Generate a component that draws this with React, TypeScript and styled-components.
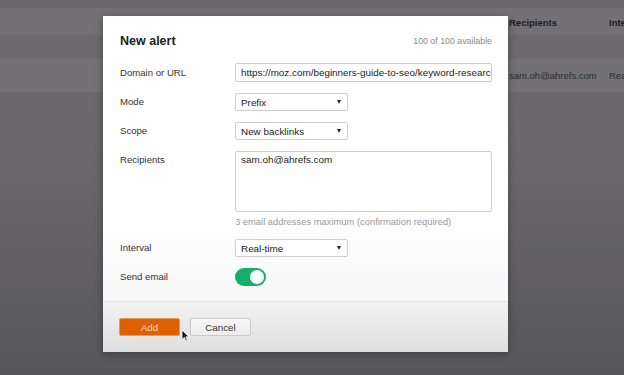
import React from 'react';
import styled, { createGlobalStyle } from 'styled-components';

const GlobalStyle = createGlobalStyle`
  html, body {
    margin: 0;
    padding: 0;
    background: #5a595c;
  }
  body {
    font-family: "Liberation Sans", Arial, Helvetica, sans-serif;
  }
`;

const Screen = styled.div`
  position: relative;
  width: 624px;
  height: 375px;
  overflow: hidden;
  display: flex;
  flex-direction: column;
  background: linear-gradient(180deg, #6d6b6f 0%, #6a686c 40%, #58575a 100%);
`;

const Band = styled.div<{ $h: number; $bg: string }>`
  height: ${p => p.$h}px;
  background: ${p => p.$bg};
  display: grid;
  grid-template-columns: 509px 100px 1fr;
  align-items: center;
  font-size: 9.5px;
  color: #2a292c;
  flex-shrink: 0;
`;

const HeadCell = styled.div`
  font-weight: bold;
  color: #1c1b1e;
  white-space: nowrap;
  overflow: hidden;
  padding-top: 2px;
`;

const Cell = styled.div`
  white-space: nowrap;
  overflow: hidden;
  color: #2c2b2e;
`;

const Modal = styled.div`
  position: absolute;
  left: 103px;
  top: 16px;
  width: 405px;
  height: 336px;
  display: flex;
  flex-direction: column;
  background: linear-gradient(180deg, #ffffff 0%, #ffffff 60%, #f2f2f2 100%);
  box-shadow: 0 2px 8px rgba(0, 0, 0, 0.35);
`;

const Body = styled.div`
  padding: 17px 16px 15px 17px;
  display: flex;
  flex-direction: column;
`;

const Header = styled.div`
  display: flex;
  justify-content: space-between;
  align-items: center;
  height: 16px;
  margin-bottom: 14px;
`;

const Title = styled.div`
  font-size: 12.5px;
  font-weight: bold;
  color: #222;
`;

const Quota = styled.div`
  font-size: 8.8px;
  color: #8a8a8a;
`;

const Form = styled.div`
  display: flex;
  flex-direction: column;
  gap: 11px;
`;

const Row = styled.div`
  display: grid;
  grid-template-columns: 115px 1fr;
  align-items: start;
`;

const Label = styled.div<{ $h?: number }>`
  font-size: 9.6px;
  color: #333;
  line-height: ${p => p.$h ?? 18}px;
`;

const TextInput = styled.div`
  height: 19px;
  box-sizing: border-box;
  border: 1px solid #cfcfcf;
  border-radius: 2px;
  background: #fff;
  padding: 0 5px;
  font-size: 9.9px;
  line-height: 17px;
  color: #222;
  white-space: nowrap;
  overflow: hidden;
`;

const Select = styled.div`
  width: 113px;
  height: 18px;
  box-sizing: border-box;
  border: 1px solid #cfcfcf;
  border-radius: 2px;
  background: #fff;
  padding: 0 5px;
  display: flex;
  align-items: center;
  justify-content: space-between;
  font-size: 9.9px;
  color: #222;
`;

const Caret = styled.span`
  width: 0;
  height: 0;
  border-left: 2.5px solid transparent;
  border-right: 2.5px solid transparent;
  border-top: 4px solid #222;
  margin-right: 1px;
`;

const TextArea = styled.div`
  height: 61px;
  box-sizing: border-box;
  border: 1px solid #cfcfcf;
  border-radius: 2px;
  background: #fff;
  padding: 3px 5px;
  font-size: 9.9px;
  line-height: 10px;
  color: #222;
`;

const Hint = styled.div`
  margin-top: 4px;
  font-size: 9.4px;
  line-height: 12px;
  color: #9a9a9a;
`;

const Toggle = styled.div<{ $on: boolean }>`
  width: 31px;
  height: 18px;
  border-radius: 9px;
  background: ${p => (p.$on ? '#14b068' : '#ccc')};
  display: flex;
  align-items: center;
  justify-content: ${p => (p.$on ? 'flex-end' : 'flex-start')};
  padding: 0 2px;
  box-sizing: border-box;
`;

const Knob = styled.span`
  width: 14px;
  height: 14px;
  border-radius: 50%;
  background: #fff;
`;

const Footer = styled.div`
  flex: 1;
  border-top: 1px solid #e3e3e3;
  background: linear-gradient(180deg, #f2f2f2 0%, #dedede 100%);
  padding: 16px 16px 0 16px;
  display: flex;
  gap: 10px;
  align-items: flex-start;
`;

const Button = styled.div<{ $primary?: boolean }>`
  width: 61px;
  height: 18px;
  box-sizing: border-box;
  border-radius: 2px;
  display: flex;
  align-items: center;
  justify-content: center;
  font-size: 9.8px;
  color: ${p => (p.$primary ? '#f6dcc4' : '#333')};
  background: ${p => (p.$primary ? '#e05f00' : 'linear-gradient(180deg, #f7f7f7, #ececec)')};
  border: 1px solid ${p => (p.$primary ? '#d9a05a' : '#c9c9c9')};
`;

const Pointer = styled.svg`
  position: absolute;
  left: 181px;
  top: 329px;
`;

const fields = [
  { label: 'Mode', value: 'Prefix' },
  { label: 'Scope', value: 'New backlinks' },
];

export default function App() {
  return (
    <>
      <GlobalStyle />
      <Screen>
        <Band $h={8} $bg="#6b696d" />
        <Band $h={27} $bg="#737175">
          <span />
          <HeadCell>Recipients</HeadCell>
          <HeadCell>Interval</HeadCell>
        </Band>
        <Band $h={23} $bg="#6c6a6e" />
        <Band $h={34} $bg="#737175">
          <span />
          <Cell>sam.oh@ahrefs.com</Cell>
          <Cell>Real-time</Cell>
        </Band>

        <Modal>
          <Body>
            <Header>
              <Title>New alert</Title>
              <Quota>100 of 100 available</Quota>
            </Header>
            <Form>
              <Row>
                <Label $h={19}>Domain or URL</Label>
                <TextInput>https://moz.com/beginners-guide-to-seo/keyword-research</TextInput>
              </Row>
              {fields.map(f => (
                <Row key={f.label}>
                  <Label>{f.label}</Label>
                  <Select>
                    {f.value}
                    <Caret />
                  </Select>
                </Row>
              ))}
              <Row>
                <Label>Recipients</Label>
                <div>
                  <TextArea>sam.oh@ahrefs.com</TextArea>
                  <Hint>3 email addresses maximum (confirmation required)</Hint>
                </div>
              </Row>
              <Row>
                <Label>Interval</Label>
                <Select>
                  Real-time
                  <Caret />
                </Select>
              </Row>
              <Row>
                <Label>Send email</Label>
                <Toggle $on>
                  <Knob />
                </Toggle>
              </Row>
            </Form>
          </Body>
          <Footer>
            <Button $primary>Add</Button>
            <Button>Cancel</Button>
          </Footer>
        </Modal>

        <Pointer width="9" height="13" viewBox="0 0 9 13">
          <path d="M1 1 L1 10.5 L3.3 8.4 L5 12 L6.4 11.3 L4.8 7.8 L7.8 7.8 Z" fill="#111" stroke="#fff" strokeWidth="0.8" />
        </Pointer>
      </Screen>
    </>
  );
}
